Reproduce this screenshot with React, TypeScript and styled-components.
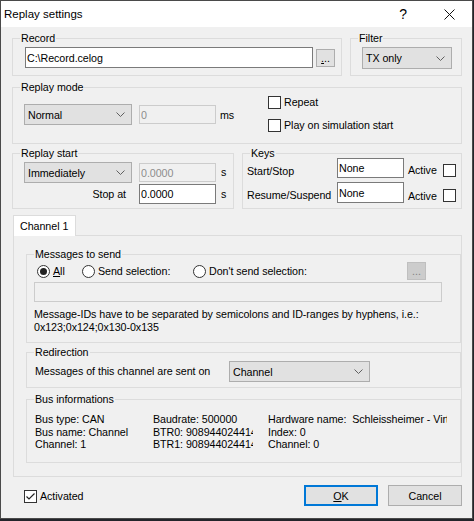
import React from 'react';
import styled, { createGlobalStyle } from 'styled-components';

const GlobalStyle = createGlobalStyle`
  html, body {
    margin: 0;
    padding: 0;
    background: #23242a;
  }
  body {
    font-family: "Liberation Sans", Arial, sans-serif;
    font-size: 10.7px;
    letter-spacing: -0.05px;
    color: #000;
  }
`;

const Window = styled.div`
  width: 473px;
  height: 519px;
  box-sizing: border-box;
  border: 1px solid #4a4a4a;
  background: #f0f0f0;
  display: flex;
  flex-direction: column;
`;

const TitleBar = styled.div`
  height: 26px;
  flex: none;
  background: #fff;
  display: flex;
  align-items: center;
  padding-left: 3px;
`;

const Title = styled.div`
  flex: 1;
  font-size: 11.5px;
  letter-spacing: 0;
`;

const TitleButton = styled.div`
  width: 46px;
  height: 26px;
  display: flex;
  align-items: center;
  justify-content: center;
  font-size: 14px;
`;

const Body = styled.div`
  flex: 1;
  padding: 5px 10px 0 11px;
  display: flex;
  flex-direction: column;
`;

const Row = styled.div<{ $top?: number }>`
  display: flex;
  gap: 8px;
  margin-top: ${p => p.$top ?? 0}px;
`;

const Group = styled.fieldset<{ $w?: number; $h: number; $top?: number; $grow?: boolean }>`
  margin: ${p => p.$top ?? 0}px 0 0 0;
  padding: 0;
  min-width: 0;
  box-sizing: border-box;
  border: 1px solid #dcdcdc;
  height: ${p => p.$h}px;
  width: ${p => (p.$w ? `${p.$w}px` : 'auto')};
  flex: ${p => (p.$grow ? '1 1 0' : 'none')};
`;

const Legend = styled.legend`
  margin-left: 7px;
  padding: 0 1px;
  line-height: 13px;
`;

const Line = styled.div<{ $pad?: string; $gap?: number; $align?: string }>`
  display: flex;
  align-items: ${p => p.$align ?? 'center'};
  padding: ${p => p.$pad ?? '0'};
  gap: ${p => p.$gap ?? 0}px;
`;

const TextBox = styled.input<{ $w: number; $h: number; $mt?: number; $ml?: number; $off?: boolean }>`
  box-sizing: border-box;
  width: ${p => p.$w}px;
  height: ${p => p.$h}px;
  margin: ${p => p.$mt ?? 0}px 0 0 ${p => p.$ml ?? 0}px;
  padding: 0 1px;
  border: 1px solid ${p => (p.$off ? '#cccccc' : '#7a7a7a')};
  background: ${p => (p.$off ? '#f0f0f0' : '#fff')};
  color: ${p => (p.$off ? '#8d8d8d' : '#000')};
  font: inherit;
  letter-spacing: inherit;
  outline: none;
  flex: none;
`;

const Combo = styled.div<{ $w: number; $h: number }>`
  box-sizing: border-box;
  width: ${p => p.$w}px;
  height: ${p => p.$h}px;
  flex: none;
  border: 1px solid #adadad;
  background: #e1e1e1;
  display: flex;
  align-items: center;
  justify-content: space-between;
  padding: 0 6px 0 3px;
`;

const Chevron = () => (
  <svg width="9" height="5" viewBox="0 0 9 5">
    <path d="M0.5 0.5 L4.5 4.5 L8.5 0.5" fill="none" stroke="#606060" strokeWidth="1" />
  </svg>
);

const Select = ({ w, h, value }: { w: number; h: number; value: string }) => (
  <Combo $w={w} $h={h}>
    <span>{value}</span>
    <Chevron />
  </Combo>
);

const SmallButton = styled.div<{ $off?: boolean; $mt?: number; $ml?: string }>`
  box-sizing: border-box;
  width: 19px;
  height: 18px;
  flex: none;
  margin: ${p => p.$mt ?? 0}px 0 0 ${p => p.$ml ?? '0'};
  border: 1px solid ${p => (p.$off ? '#bfbfbf' : '#adadad')};
  background: ${p => (p.$off ? '#cccccc' : '#e1e1e1')};
  color: ${p => (p.$off ? '#838383' : '#000')};
  display: flex;
  align-items: flex-end;
  justify-content: center;
  line-height: 12px;
  padding-bottom: 2px;
`;

const Unit = styled.span<{ $mt?: number; $ml?: number }>`
  margin: ${p => p.$mt ?? 0}px 0 0 ${p => p.$ml ?? 0}px;
  line-height: 13px;
`;

const Label = styled.span<{ $w?: number; $right?: boolean; $mb?: number; $pl?: number }>`
  width: ${p => (p.$w ? `${p.$w}px` : 'auto')};
  flex: none;
  line-height: 13px;
  text-align: ${p => (p.$right ? 'right' : 'left')};
  box-sizing: border-box;
  padding-right: ${p => (p.$right ? 6 : 0)}px;
  padding-left: ${p => p.$pl ?? 0}px;
  margin-bottom: ${p => p.$mb ?? 0}px;
  white-space: nowrap;
`;

const Box = styled.span<{ $mb?: number }>`
  box-sizing: border-box;
  width: 13px;
  height: 13px;
  flex: none;
  border: 1px solid #333;
  background: #fff;
  margin-bottom: ${p => p.$mb ?? 0}px;
  display: flex;
  align-items: center;
  justify-content: center;
`;

const CheckColumn = styled.div`
  display: flex;
  flex-direction: column;
  gap: 10px;
  margin-top: 2px;
`;

const CheckRow = styled.label`
  display: flex;
  align-items: center;
  gap: 3px;
  line-height: 13px;
`;

const Check = ({ on }: { on?: boolean }) => (
  <Box>
    {on && (
      <svg width="11" height="11" viewBox="0 0 11 11">
        <path d="M1.5 5.5 L4 8 L9.5 2.5" fill="none" stroke="#222" strokeWidth="1.2" />
      </svg>
    )}
  </Box>
);

const Radio = styled.label<{ $w?: number; $ml?: number }>`
  display: flex;
  align-items: center;
  gap: 3px;
  width: ${p => (p.$w ? `${p.$w}px` : 'auto')};
  margin-left: ${p => p.$ml ?? 0}px;
  flex: none;
  white-space: nowrap;
`;

const Circle = styled.span<{ $on?: boolean }>`
  box-sizing: border-box;
  width: 13px;
  height: 13px;
  border-radius: 50%;
  border: 1px solid #333;
  background: #fff;
  display: flex;
  align-items: center;
  justify-content: center;
  &::after {
    content: '';
    width: 7px;
    height: 7px;
    border-radius: 50%;
    background: ${p => (p.$on ? '#222' : 'transparent')};
  }
`;

const Stack = styled.div<{ $gap?: number; $pad?: string; $mt?: number }>`
  display: flex;
  flex-direction: column;
  gap: ${p => p.$gap ?? 0}px;
  padding: ${p => p.$pad ?? '0'};
  margin-top: ${p => p.$mt ?? 0}px;
`;

const ModeLeft = styled.div`
  width: 244px;
  display: flex;
  align-items: flex-start;
  margin-top: 10px;
  flex: none;
`;

const Tabs = styled.div`
  margin-top: 6px;
  display: flex;
  flex-direction: column;
`;

const TabStrip = styled.div`
  display: flex;
  padding-left: 1px;
`;

const Tab = styled.div`
  position: relative;
  z-index: 1;
  box-sizing: border-box;
  width: 63px;
  height: 21px;
  margin-bottom: -1px;
  border: 1px solid #dcdcdc;
  border-bottom: none;
  background: #fff;
  padding-left: 6px;
  line-height: 20px;
`;

const TabPanel = styled.div`
  box-sizing: border-box;
  margin-left: 1px;
  height: 242px;
  border: 1px solid #dcdcdc;
  padding: 12px 0 0 12px;
  display: flex;
  flex-direction: column;
`;

const Hint = styled.div`
  margin-top: 6px;
  line-height: 13px;
`;

const InfoGrid = styled.div`
  display: grid;
  grid-template-columns: 118px 100px 194px;
  padding: 7px 0 0 8px;
  line-height: 12.5px;
  & > div {
    overflow: hidden;
    white-space: pre;
  }
  & > div:nth-child(3n) {
    padding-left: 15px;
  }
`;

const Footer = styled.div`
  display: flex;
  align-items: center;
  padding-top: 8px;
  gap: 10px;
`;

const Activated = styled(CheckRow)`
  margin-left: 12px;
  margin-right: auto;
  padding-top: 1px;
`;

const DialogButton = styled.div<{ $focus?: boolean }>`
  box-sizing: border-box;
  width: 74px;
  height: 21px;
  border: ${p => (p.$focus ? '2px solid #0078d7' : '1px solid #adadad')};
  background: #e1e1e1;
  display: flex;
  align-items: center;
  justify-content: center;
`;

export default function App() {
  return (
    <>
      <GlobalStyle />
      <Window>
        <TitleBar>
          <Title>Replay settings</Title>
          <TitleButton>?</TitleButton>
          <TitleButton>
            <svg width="11" height="11" viewBox="0 0 11 11">
              <path d="M0.5 0.5 L10.5 10.5 M10.5 0.5 L0.5 10.5" stroke="#111" strokeWidth="1" />
            </svg>
          </TitleButton>
        </TitleBar>
        <Body>
          <Row>
            <Group $w={330} $h={44}>
              <Legend>Record</Legend>
              <Line $pad="2px 0 0 12px" $gap={3} $align="flex-start">
                <TextBox $w={288} $h={21} readOnly defaultValue="C:\Record.celog" />
                <SmallButton $mt={2}>
                  <span><u>.</u>..</span>
                </SmallButton>
              </Line>
            </Group>
            <Group $h={44} $grow>
              <Legend>Filter</Legend>
              <Line $pad="2px 0 0 11px">
                <Select w={90} h={22} value="TX only" />
              </Line>
            </Group>
          </Row>

          <Row $top={5}>
            <Group $h={63} $grow>
              <Legend>Replay mode</Legend>
              <Line $pad="0 0 0 11px" $align="flex-start">
                <ModeLeft>
                  <Select w={108} h={21} value="Normal" />
                  <TextBox $w={77} $h={19} $mt={1} $ml={7} $off readOnly defaultValue="0" />
                  <Unit $mt={5} $ml={4}>ms</Unit>
                </ModeLeft>
                <CheckColumn>
                  <CheckRow><Check />Repeat</CheckRow>
                  <CheckRow><Check />Play on simulation start</CheckRow>
                </CheckColumn>
              </Line>
            </Group>
          </Row>

          <Row $top={3}>
            <Group $w={222} $h={62}>
              <Legend>Replay start</Legend>
              <Stack $gap={1} $pad="2px 0 0 11px">
                <Line>
                  <Select w={108} h={21} value="Immediately" />
                  <TextBox $w={77} $h={19} $ml={7} $off readOnly defaultValue="0.0000" />
                  <Unit $ml={5}>s</Unit>
                </Line>
                <Line>
                  <Label $w={108} $right>Stop at</Label>
                  <TextBox $w={77} $h={20} $ml={7} readOnly defaultValue="0.0000" />
                  <Unit $ml={5}>s</Unit>
                </Line>
              </Stack>
            </Group>
            <Group $h={62} $grow>
              <Legend>Keys</Legend>
              <Stack $gap={4} $pad="0 0 0 4px" $mt={-2}>
                <Line $align="flex-end">
                  <Label $w={90}>Start/Stop</Label>
                  <TextBox $w={67} $h={20} readOnly defaultValue="None" />
                  <Label $w={39} $pl={4} $mb={1}>Active</Label>
                  <Box $mb={1} />
                </Line>
                <Line $align="flex-end">
                  <Label $w={90} $mb={1}>Resume/Suspend</Label>
                  <TextBox $w={67} $h={21} readOnly defaultValue="None" />
                  <Label $w={39} $pl={4}>Active</Label>
                  <Box $mb={1} />
                </Line>
              </Stack>
            </Group>
          </Row>

          <Tabs>
            <TabStrip>
              <Tab>Channel 1</Tab>
            </TabStrip>
            <TabPanel>
              <Group $h={95}>
                <Legend>Messages to send</Legend>
                <Stack $pad="1px 0 0 7px">
                  <Line style={{ width: 392, height: 18 }}>
                    <Radio $w={45} $ml={3}><Circle $on /><span><u>A</u>ll</span></Radio>
                    <Radio $w={111}><Circle />Send selection:</Radio>
                    <Radio><Circle />Don't send selection:</Radio>
                    <SmallButton $off $ml="auto">
                      <span>...</span>
                    </SmallButton>
                  </Line>
                  <TextBox $w={408} $h={20} $mt={2} $off readOnly defaultValue="" />
                  <Hint>
                    Message-IDs have to be separated by semicolons and ID-ranges by hyphens, i.e.:
                    <br />
                    0x123;0x124;0x130-0x135
                  </Hint>
                </Stack>
              </Group>
              <Group $h={42} $top={3}>
                <Legend>Redirection</Legend>
                <Line $pad="2px 0 0 8px">
                  <Label $w={194}>Messages of this channel are sent on</Label>
                  <Select w={141} h={21} value="Channel" />
                </Line>
              </Group>
              <Group $h={70} $top={5}>
                <Legend>Bus informations</Legend>
                <InfoGrid>
                  <div>Bus type: CAN</div>
                  <div>Baudrate: 500000</div>
                  <div>Hardware name:  Schleissheimer - Virtual</div>
                  <div>Bus name: Channel</div>
                  <div>BTR0: 90894402441408</div>
                  <div>Index: 0</div>
                  <div>Channel: 1</div>
                  <div>BTR1: 90894402441408</div>
                  <div>Channel: 0</div>
                </InfoGrid>
              </Group>
            </TabPanel>
          </Tabs>

          <Footer>
            <Activated><Check on />Activated</Activated>
            <DialogButton $focus><span><u>O</u>K</span></DialogButton>
            <DialogButton>Cancel</DialogButton>
          </Footer>
        </Body>
      </Window>
    </>
  );
}
